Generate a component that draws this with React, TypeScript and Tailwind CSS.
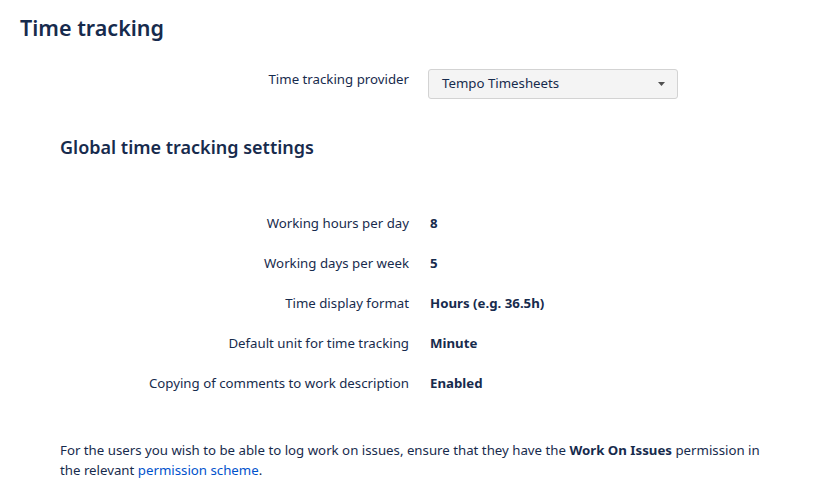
const rows: { label: string; value: string }[] = [
  { label: "Working hours per day", value: "8" },
  { label: "Working days per week", value: "5" },
  { label: "Time display format", value: "Hours (e.g. 36.5h)" },
  { label: "Default unit for time tracking", value: "Minute" },
  { label: "Copying of comments to work description", value: "Enabled" },
];

export default function App() {
  return (
    <div className="w-[829px] h-[487px] bg-white text-[#172b4d] font-['Noto_Sans',sans-serif] text-[13.25px] overflow-hidden">
      <div className="pl-5 pt-[13px]">
        <h1 className="text-[21.5px] leading-[30px] font-semibold">Time tracking</h1>

        <div className="mt-[26px] flex items-start">
          <div className="w-[389px] text-right leading-5">Time tracking provider</div>
          <div className="ml-[19px] w-[250px] h-[30px] border border-[#d3d3d3] rounded-[3px] bg-[#f4f4f4] flex items-center justify-between pl-[13px] pr-3">
            <span>Tempo Timesheets</span>
            <svg width="7" height="4" viewBox="0 0 7 4" className="fill-[#505050]">
              <path d="M0 0h7L3.5 4z" />
            </svg>
          </div>
        </div>

        <h2 className="ml-10 mt-[36px] text-[18px] leading-6 font-semibold">Global time tracking settings</h2>

        <div className="mt-[54px] flex flex-col gap-5">
          {rows.map((r) => (
            <div key={r.label} className="flex leading-5">
              <div className="w-[389px] text-right">{r.label}</div>
              <div className="ml-[21px] font-bold">{r.value}</div>
            </div>
          ))}
        </div>

        <p className="ml-10 mt-[47px] w-[710px] leading-5">
          For the users you wish to be able to log work on issues, ensure that they have the{" "}
          <b>Work On Issues</b> permission in the relevant{" "}
          <a className="text-[#0052cc]">permission scheme</a>.
        </p>
      </div>
    </div>
  );
}
